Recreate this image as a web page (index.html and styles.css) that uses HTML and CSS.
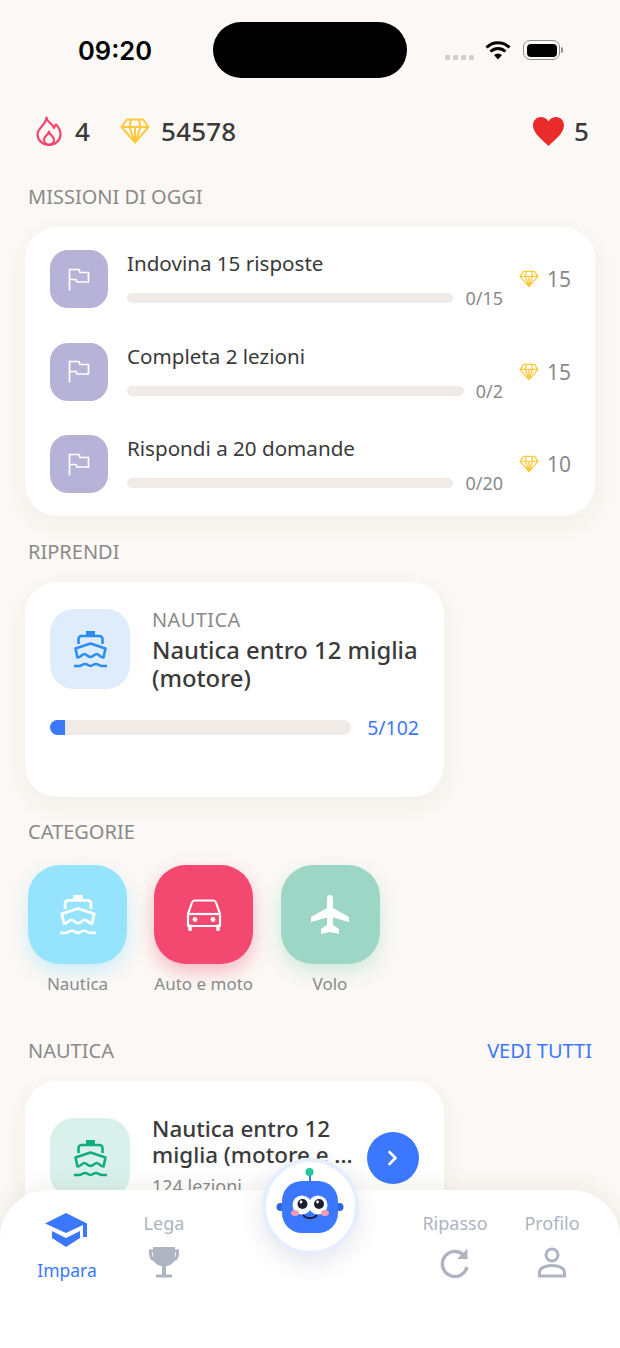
FILE: index.html
```html
<!DOCTYPE html>
<html lang="it">
<head>
    <meta charset="UTF-8">
    <title>Impara</title>
    <link rel="stylesheet" href="styles.css">
</head>
<body>
    <svg class="defs" width="0" height="0">
        <symbol id="gem" viewBox="0 0 30 26">
            <path d="M7 1.5H23L28.5 9L15 24.5L1.5 9ZM1.5 9H28.5M11 1.5L9.5 9L15 24.5L20.5 9L19 1.5M15 9V24" fill="none" stroke="#ffc93f" stroke-width="2" stroke-linejoin="round"/>
        </symbol>
        <symbol id="flag" viewBox="0 0 22 23">
            <path d="M1.5 22.5V1.5H11L12 4.5H20.5V14H9L8 11.5H1.5" fill="none" stroke="#fff" stroke-width="1.7"/>
        </symbol>
        <symbol id="ship" viewBox="0 0 33 37">
            <path d="M12 0H21V5H12Z" fill="currentColor"/>
            <path d="M4.5 13V8a3 3 0 0 1 3-3H25.5a3 3 0 0 1 3 3V13" fill="none" stroke="currentColor" stroke-width="2.6"/>
            <path d="M1.5 17.5L16.5 12.5L31.5 17.5L29.5 26.5C26.5 26.5 25 23 22.5 23C20.5 23 19.5 26 16.5 26C13.5 26 12.5 23 10.5 23C8 23 6.5 26.5 3.5 26.5Z" fill="none" stroke="currentColor" stroke-width="2.6" stroke-linejoin="round"/>
            <path d="M0 35H5C8 35 8 33 11 33C14 33 14 35 16.5 35C19 35 19 33 22 33C25 33 25 35 28 35H33" fill="none" stroke="currentColor" stroke-width="2.4"/>
        </symbol>
    </svg>

    <div class="page">
        <div class="status">
            <span class="time">09:20</span>
            <div class="island"></div>
            <div class="status-icons">
                <div class="signal"><i></i><i></i><i></i><i></i></div>
                <svg width="26" height="20" viewBox="0 0 26 20">
                    <path d="M1.5 7.5C8 1 18 1 24.5 7.5M5.5 11.5C10 7.5 16 7.5 20.5 11.5" fill="none" stroke="#000" stroke-width="3"/>
                    <path d="M9 15C11.5 13 14.5 13 17 15L13 19.5Z"/>
                </svg>
                <div class="battery"><div class="battery-fill"></div></div>
                <div class="battery-tip"></div>
            </div>
        </div>

        <div class="stats">
            <svg class="flame" width="26" height="30" viewBox="0 0 26 30">
                <path d="M10.5 1.5C11 7 16.5 7 18 12C18.5 10.5 19 9.5 20 8.5C23 11.5 24.5 15 24.5 18.5A11.5 10.5 0 0 1 1.5 18.5C1.5 11.5 9.5 10 10.5 1.5Z" fill="none" stroke="#f4476f" stroke-width="2.2" stroke-linejoin="round"/>
                <path d="M13 15.5C13 18.5 18 20 18 23.5A5 5 0 0 1 8 23.5C8 20 12.5 19 13 15.5Z" fill="none" stroke="#f4476f" stroke-width="2.2" stroke-linejoin="round"/>
            </svg>
            <span class="stat-num streak">4</span>
            <svg class="gem-big"><use href="#gem"/></svg>
            <span class="stat-num">54578</span>
            <svg class="heart" width="31" height="29" viewBox="0 0 31 29">
                <path d="M15.5 29C11 24 0 17 0 8.5C0 3.5 3.5 0 8 0C11 0 14 1.5 15.5 4.5C17 1.5 20 0 23 0C27.5 0 31 3.5 31 8.5C31 17 20 24 15.5 29Z" fill="#ea2b2b"/>
            </svg>
            <span class="stat-num">5</span>
        </div>

        <main class="content">
            <h2 class="section-label first">MISSIONI DI OGGI</h2>
            <div class="card missions">
                <div class="mission">
                    <div class="mission-icon"><svg width="22" height="23"><use href="#flag"/></svg></div>
                    <div class="mission-body">
                        <div class="mission-title">Indovina 15 risposte</div>
                        <div class="mission-progress">
                            <div class="track"></div>
                            <span class="mission-count">0/15</span>
                        </div>
                    </div>
                    <div class="reward"><svg width="20" height="18"><use href="#gem"/></svg><span>15</span></div>
                </div>
                <div class="mission">
                    <div class="mission-icon"><svg width="22" height="23"><use href="#flag"/></svg></div>
                    <div class="mission-body">
                        <div class="mission-title">Completa 2 lezioni</div>
                        <div class="mission-progress">
                            <div class="track"></div>
                            <span class="mission-count">0/2</span>
                        </div>
                    </div>
                    <div class="reward"><svg width="20" height="18"><use href="#gem"/></svg><span>15</span></div>
                </div>
                <div class="mission">
                    <div class="mission-icon"><svg width="22" height="23"><use href="#flag"/></svg></div>
                    <div class="mission-body">
                        <div class="mission-title">Rispondi a 20 domande</div>
                        <div class="mission-progress">
                            <div class="track"></div>
                            <span class="mission-count">0/20</span>
                        </div>
                    </div>
                    <div class="reward"><svg width="20" height="18"><use href="#gem"/></svg><span>10</span></div>
                </div>
            </div>

            <h2 class="section-label">RIPRENDI</h2>
            <div class="card course resume">
                <div class="course-top">
                    <div class="course-icon blue"><svg width="33" height="37"><use href="#ship"/></svg></div>
                    <div class="course-text">
                        <div class="course-cat">NAUTICA</div>
                        <div class="course-title">Nautica entro 12 miglia (motore)</div>
                    </div>
                </div>
                <div class="course-progress">
                    <div class="track big"><div class="track-fill" style="width: 5%"></div></div>
                    <span class="course-count">5/102</span>
                </div>
            </div>

            <h2 class="section-label cat-label">CATEGORIE</h2>
            <div class="cats">
                <div class="cat">
                    <div class="cat-tile sky"><svg width="36" height="40"><use href="#ship"/></svg></div>
                    <span>Nautica</span>
                </div>
                <div class="cat">
                    <div class="cat-tile pink">
                        <svg width="36" height="32" viewBox="0 0 36 32" fill="none" stroke="#fff" stroke-width="2.2">
                            <path d="M2 15L6 3.5A3 3 0 0 1 9 1.5H27A3 3 0 0 1 30 3.5L34 15V27H2Z" stroke-linejoin="round"/>
                            <path d="M2 15H34"/>
                            <path d="M4 27V30.5M32 27V30.5" stroke-width="3.6" stroke-linecap="round"/>
                            <circle cx="9" cy="20.5" r="2.4" fill="#fff" stroke="none"/>
                            <circle cx="27" cy="20.5" r="2.4" fill="#fff" stroke="none"/>
                        </svg>
                    </div>
                    <span>Auto e moto</span>
                </div>
                <div class="cat">
                    <div class="cat-tile green">
                        <svg width="40" height="39" viewBox="0 0 40 39">
                            <path d="M20 0C17 0 17 3 17 5V13L1 22V27L17 22.5V30L11 34V39L20 37L29 39V34L23 30V22.5L39 27V22L23 13V5C23 3 23 0 20 0Z" fill="#fff"/>
                        </svg>
                    </div>
                    <span>Volo</span>
                </div>
            </div>

            <div class="section-head">
                <h2 class="section-label">NAUTICA</h2>
                <span class="see-all">VEDI TUTTI</span>
            </div>
            <div class="card course listing">
                <div class="course-top">
                    <div class="course-icon teal"><svg width="33" height="37"><use href="#ship"/></svg></div>
                    <div class="listing-text">
                        <div class="listing-title">Nautica entro 12<br>miglia (motore e ...</div>
                        <div class="listing-sub">124 lezioni</div>
                    </div>
                    <div class="go">
                        <svg width="12" height="16" viewBox="0 0 12 16"><path d="M2.5 2L8.5 8L2.5 14" fill="none" stroke="#fff" stroke-width="2.6" stroke-linecap="round" stroke-linejoin="round"/></svg>
                    </div>
                </div>
            </div>
        </main>

        <nav class="tabbar">
            <div class="tab active">
                <svg width="44" height="34" viewBox="0 0 44 34" fill="#3b78ff">
                    <path d="M21 0L0 10.5L21 20L38 12V24H42V10.5Z"/>
                    <path d="M7 18V25L21 34L35 25V18L21 25Z"/>
                </svg>
                <span>Impara</span>
            </div>
            <div class="tab label-first">
                <span>Lega</span>
                <svg width="30" height="31" viewBox="0 0 30 31" fill="none" stroke="#aeb4c2" stroke-width="3">
                    <path d="M5.5 1.5H24.5V10C24.5 15 20.5 18 15 18C9.5 18 5.5 15 5.5 10Z" fill="#aeb4c2"/>
                    <path d="M6 4H1.5V7C1.5 11 4 13 8 13.5M24 4H28.5V7C28.5 11 26 13 22 13.5"/>
                    <path d="M15 18V28" stroke-width="4"/>
                    <path d="M7 29H23"/>
                </svg>
            </div>
            <div class="tab-gap"></div>
            <div class="tab label-first">
                <span>Ripasso</span>
                <svg width="30" height="31" viewBox="0 0 30 31" fill="none" stroke="#aeb4c2" stroke-width="3.4">
                    <path d="M23 7.5A12.5 12.5 0 1 0 27 20"/>
                    <path d="M27.5 1.5V12H17Z" fill="#aeb4c2" stroke="none"/>
                </svg>
            </div>
            <div class="tab label-first">
                <span>Profilo</span>
                <svg width="28" height="31" viewBox="0 0 28 31" fill="none" stroke="#aeb4c2" stroke-width="3">
                    <circle cx="14" cy="8" r="6"/>
                    <path d="M1.5 29V25.5C1.5 21 7 18.5 14 18.5C21 18.5 26.5 21 26.5 25.5V29Z"/>
                </svg>
            </div>
            <div class="robot">
                <svg width="68" height="66" viewBox="0 0 68 66">
                    <rect x="33" y="7" width="2" height="7" fill="#3b78ff"/>
                    <circle cx="33.5" cy="4" r="4" fill="#1fc79a"/>
                    <circle cx="4.5" cy="39" r="4" fill="#2f66e0"/>
                    <circle cx="63.5" cy="39" r="4" fill="#2f66e0"/>
                    <rect x="6" y="13" width="56" height="52" rx="20" fill="#3b78ff"/>
                    <circle cx="26" cy="37" r="9.5" fill="#fff"/>
                    <circle cx="42" cy="37" r="9.5" fill="#fff"/>
                    <circle cx="26.5" cy="36" r="5" fill="#1c1f33"/>
                    <circle cx="43" cy="36" r="5" fill="#1c1f33"/>
                    <circle cx="25" cy="34" r="1.4" fill="#fff"/>
                    <circle cx="41.5" cy="34" r="1.4" fill="#fff"/>
                    <ellipse cx="19" cy="45" rx="4" ry="3" fill="#f59cb0"/>
                    <ellipse cx="49" cy="45" rx="4" ry="3" fill="#f59cb0"/>
                    <path d="M27.5 47.5C30 51 38 51 40.5 47.5" fill="none" stroke="#1c1f33" stroke-width="2" stroke-linecap="round"/>
                </svg>
            </div>
        </nav>
    </div>
</body>
</html>
```

FILE: styles.css
```css
:root {
    --bg: #fbf8f5;
    --text: #3a3a3a;
    --muted: #8a8a8a;
    --track: #f0ebe6;
    --blue: #3b78ff;
    --nav-grey: #aeb4c2;
}

* {
    box-sizing: border-box;
}

body {
    margin: 0;
    background: var(--bg);
    color: var(--text);
    font-family: 'Noto Sans', sans-serif;
}

.defs {
    position: absolute;
}

.page {
    position: relative;
    height: 1348px;
    overflow: hidden;
}

/* status bar */
.status {
    display: flex;
    align-items: center;
    height: 100px;
}

.time {
    width: 213px;
    padding-left: 78px;
    font-family: 'Inter', sans-serif;
    font-size: 25.5px;
    font-weight: 600;
    color: #000;
}

.island {
    width: 194px;
    height: 56px;
    border-radius: 28px;
    background: #000;
}

.status-icons {
    display: flex;
    align-items: center;
    margin-left: 38px;
}

.signal {
    display: flex;
    gap: 3px;
    margin-top: 14px;
    margin-right: 11px;
}

.signal i {
    width: 5px;
    height: 5px;
    border-radius: 1.5px;
    background: #cfcfcf;
}

.battery {
    width: 37px;
    height: 20px;
    margin-left: 12px;
    padding: 2.5px;
    border: 1.5px solid #8f8f8f;
    border-radius: 7px;
}

.battery-fill {
    height: 100%;
    border-radius: 4px;
    background: #000;
}

.battery-tip {
    width: 2px;
    height: 6px;
    margin-left: 1px;
    border-radius: 0 2px 2px 0;
    background: #8f8f8f;
}

/* streak row */
.stats {
    display: flex;
    align-items: center;
    height: 64px;
    padding: 0 31px 2px 36px;
}

.stat-num {
    margin-left: 11px;
    font-size: 26px;
    font-weight: 500;
    letter-spacing: 0.2px;
}

.flame {
    margin-right: 2px;
}

.streak {
    margin-right: 30px;
}

.gem-big {
    width: 30px;
    height: 26px;
}

.heart {
    margin-left: auto;
    margin-right: -1px;
}

/* sections */
.content {
    padding: 0 25px;
}

.section-label {
    margin: 24px 0 18px;
    padding-left: 3px;
    font-size: 20px;
    font-weight: 400;
    line-height: 24px;
    color: var(--muted);
}

.section-label.first {
    margin-top: 21px;
}

.card {
    background: #fff;
    border-radius: 32px;
    box-shadow: 0 8px 24px rgba(110, 80, 50, 0.06);
}

.missions {
    display: flex;
    flex-direction: column;
    gap: 34.5px;
    height: 289px;
    padding: 23px 25px;
}

.mission {
    display: flex;
    height: 58px;
}

.mission-icon {
    display: flex;
    align-items: center;
    justify-content: center;
    flex: none;
    width: 58px;
    height: 58px;
    border-radius: 18px;
    background: #b7b2d8;
}

.mission-body {
    flex: none;
    width: 376px;
    margin-left: 19px;
}

.mission-title {
    margin-top: -1px;
    margin-bottom: 9px;
    font-size: 20.6px;
    line-height: 28px;
    white-space: nowrap;
}

.mission-progress {
    display: flex;
    align-items: center;
    gap: 12px;
}

.track {
    flex: 1;
    height: 10px;
    border-radius: 5px;
    background: var(--track);
}

.mission-count {
    font-size: 18px;
    color: var(--muted);
}

.reward {
    display: flex;
    align-items: center;
    gap: 8px;
    margin-left: 16px;
    font-size: 21px;
    color: var(--muted);
}

/* course cards */
.course {
    width: 419px;
    padding: 27px 25px;
}

.resume {
    height: 215px;
}

.course-top {
    display: flex;
    gap: 22px;
}

.course-text {
    margin-top: -1px;
}

.course-icon {
    display: flex;
    align-items: center;
    justify-content: center;
    flex: none;
    width: 80px;
    height: 80px;
    border-radius: 24px;
}

.course-icon.blue {
    background: #deecfb;
    color: #2d8cf0;
}

.course-icon.teal {
    background: #d9f1ea;
    color: #12ad7f;
}

.course-cat {
    font-size: 20px;
    line-height: 24px;
    letter-spacing: 0.4px;
    color: var(--muted);
}

.course-title {
    margin-top: 4px;
    font-size: 23.8px;
    line-height: 28px;
    font-weight: 500;
}

.course-progress {
    display: flex;
    align-items: center;
    gap: 16px;
    margin-top: 22px;
}

.track.big {
    height: 15px;
    border-radius: 8px;
    overflow: hidden;
}

.track-fill {
    height: 100%;
    background: var(--blue);
}

.course-count {
    font-size: 19.5px;
    color: var(--blue);
}

/* categories */
.section-label.cat-label {
    margin-top: 23px;
    margin-bottom: 21px;
}

.cats {
    display: flex;
    gap: 27.25px;
    padding-left: 3px;
}

.cat {
    display: flex;
    flex-direction: column;
    align-items: center;
    gap: 8px;
    width: 99px;
    font-size: 17px;
    line-height: 24px;
    color: var(--muted);
    white-space: nowrap;
}

.cat-tile {
    display: flex;
    align-items: center;
    justify-content: center;
    width: 99px;
    height: 99px;
    border-radius: 32px;
    color: #fff;
}

.sky {
    background: #96e3fd;
    box-shadow: 0 8px 18px rgba(150, 227, 253, 0.45);
}

.pink {
    background: #f3486f;
    box-shadow: 0 8px 18px rgba(243, 72, 111, 0.35);
}

.green {
    background: #9dd6c4;
    box-shadow: 0 8px 18px rgba(157, 214, 196, 0.45);
}

.section-head {
    display: flex;
    align-items: center;
    justify-content: space-between;
    margin-top: 43px;
    margin-bottom: 18px;
    padding-right: 3px;
}

.section-head .section-label {
    margin: 0;
}

.see-all {
    font-size: 20px;
    line-height: 24px;
    color: var(--blue);
}

.listing {
    height: 260px;
    padding-top: 37px;
}

.listing-text {
    flex: none;
    width: 200px;
    margin-top: -2px;
}

.listing-title {
    font-size: 22.4px;
    line-height: 26px;
    font-weight: 500;
    white-space: nowrap;
}

.listing-sub {
    margin-top: 6px;
    font-size: 18px;
    line-height: 24px;
    color: var(--muted);
}

.go {
    display: flex;
    align-items: center;
    justify-content: center;
    flex: none;
    width: 52px;
    height: 52px;
    margin: 14px 0 0 -7px;
    border-radius: 50%;
    background: var(--blue);
}

/* bottom tabs */
.tabbar {
    position: absolute;
    left: 0;
    right: 0;
    bottom: 0;
    display: flex;
    justify-content: space-between;
    height: 158px;
    padding: 23px 19.5px 0 18.5px;
    border-radius: 48px 48px 0 0;
    background: #fff;
    box-shadow: 0 -6px 20px rgba(90, 70, 50, 0.07);
}

.tab {
    display: flex;
    flex-direction: column;
    align-items: center;
    gap: 12px;
    width: 97px;
    font-size: 18px;
    line-height: 22px;
    color: var(--nav-grey);
}

.tab.label-first span {
    margin-top: -1px;
    margin-bottom: 1px;
}

.tab.active {
    font-size: 17.5px;
    color: var(--blue);
}

.tab-gap {
    width: 194px;
}

.robot {
    position: absolute;
    top: -32.5px;
    left: 261.5px;
    display: flex;
    align-items: center;
    justify-content: center;
    width: 97px;
    height: 97px;
    padding-bottom: 10px;
    border: 4px solid #e6eefe;
    border-radius: 50%;
    background: #fff;
    box-shadow: 0 8px 24px rgba(40, 50, 90, 0.12);
}
```
